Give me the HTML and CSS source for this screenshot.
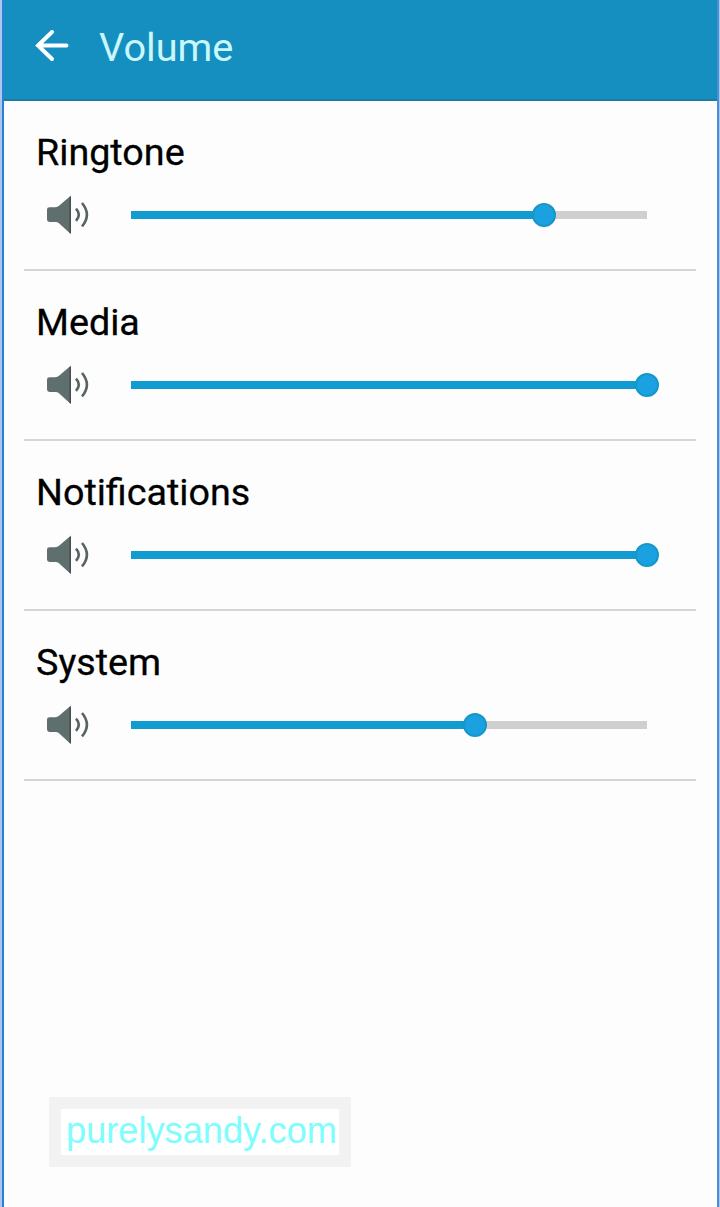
FILE: index.html
```html
<!DOCTYPE html>
<html lang="en">

<head>
    <meta charset="UTF-8">
    <meta name="viewport" content="width=device-width, initial-scale=1.0">
    <title>Volume</title>
    <link rel="stylesheet" href="styles.css">
</head>

<body>

    <!-- Shared speaker icon -->
    <svg class="sprite" aria-hidden="true">
        <symbol id="speaker" viewBox="0 0 44 40">
            <path d="M3.5 12.2h6q2 0 3.500-1.400L25 .6v38.600L13 28.300q-1.500-1.400-3.500-1.400h-6Q1 26.900 1 24.500v-10Q1 12.200 3.500 12.200z" fill="#5f6f6e"/>
            <path d="M24.200 2v36" stroke="#46504f" stroke-width="1.600" fill="none"/>
            <path d="M30 13.600q5.600 6 0 12.200M36 8q9.800 11.600 0 23.400" stroke="#586463" stroke-width="2.600" fill="none"/>
        </symbol>
    </svg>

    <div class="screen">
        <header class="header">
            <svg class="back" viewBox="0 0 34 34" aria-label="Back">
                <path d="M31.500 16.500H3M17 3L3 16.500 17 30"/>
            </svg>
            <h1>Volume</h1>
        </header>

        <main class="settings">
            <section class="row">
                <h2>Ringtone</h2>
                <div class="control">
                    <svg class="speaker"><use href="#speaker"/></svg>
                    <div class="track"><div class="fill" style="width: 80%"></div></div>
                </div>
            </section>

            <section class="row">
                <h2>Media</h2>
                <div class="control">
                    <svg class="speaker"><use href="#speaker"/></svg>
                    <div class="track"><div class="fill" style="width: 100%"></div></div>
                </div>
            </section>

            <section class="row">
                <h2>Notifications</h2>
                <div class="control">
                    <svg class="speaker"><use href="#speaker"/></svg>
                    <div class="track"><div class="fill" style="width: 100%"></div></div>
                </div>
            </section>

            <section class="row">
                <h2>System</h2>
                <div class="control">
                    <svg class="speaker"><use href="#speaker"/></svg>
                    <div class="track"><div class="fill" style="width: 66.600%"></div></div>
                </div>
            </section>
        </main>

        <footer class="site-tag">purelysandy.com</footer>
    </div>

</body>

</html>
```
FILE: styles.css
```css
* {
    box-sizing: border-box;
}

body {
    margin: 0;
    padding: 0 1px 0 2px;
    background-color: #a9c8ef;
    font-family: Roboto, sans-serif;
}

.sprite {
    display: none;
}

.screen {
    display: flex;
    flex-direction: column;
    height: 1207px;
    background-color: #fdfdfd;
    border-left: 2px solid #2f7fd0;
    border-right: 2px solid #4a8ddb;
}

/* Title bar */
.header {
    display: flex;
    align-items: center;
    gap: 30px;
    height: 101px;
    padding: 0 0 8px 31px;
    background-color: #158fc0;
    border-bottom: 2px solid #187ca4;
}

.header h1 {
    margin: 0;
    padding-top: 4px;
    font-size: 39.7px;
    font-weight: 400;
    line-height: 48px;
    color: #c9f7fb;
}

.back {
    width: 34px;
    height: 34px;
    fill: none;
    stroke: #ffffff;
    stroke-width: 4;
    stroke-linecap: round;
}

/* Volume rows */
.settings {
    padding: 0 21px 0 20px;
}

.row {
    height: 170px;
    padding: 29px 49px 0 12px;
    border-bottom: 2px solid #d6d6d6;
}

.row h2 {
    margin: 0;
    font-size: 37.7px;
    font-weight: 400;
    line-height: 44px;
    color: #000000;
    -webkit-text-stroke: 0.3px #000000;
}

.control {
    display: flex;
    align-items: center;
    gap: 41px;
    margin-top: 21px;
    padding-left: 10px;
}

.speaker {
    width: 44px;
    height: 40px;
}

.track {
    flex: 1;
    height: 8px;
    background-color: #cfcfcf;
}

.fill {
    position: relative;
    height: 100%;
    background-color: #129bd0;
}

/* Slider thumb */
.fill::after {
    content: "";
    position: absolute;
    top: 50%;
    right: 0;
    width: 20px;
    height: 20px;
    border: 2px solid #1598c6;
    border-radius: 50%;
    background-color: #1ba1e2;
    transform: translate(50%, -50%);
}

/* Site name box */
.site-tag {
    align-self: flex-start;
    width: 302px;
    height: 70px;
    margin: auto 0 40px 45px;
    padding-left: 3px;
    border: 12px solid #f2f2f2;
    background-color: #ffffff;
    font-family: "Liberation Sans", sans-serif;
    font-size: 36.2px;
    line-height: 44px;
    text-align: center;
    color: #7dfdfd;
}
```
